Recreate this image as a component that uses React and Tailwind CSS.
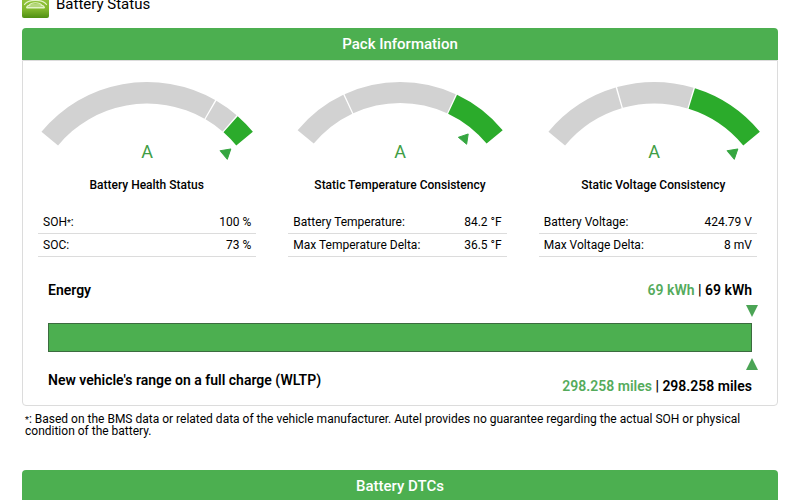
import React from 'react';

const GAUGES = [
  { title: 'Battery Health Status', grade: 'A', splits: [30, 41], pointer: 50, scale: 1 },
  { title: 'Static Temperature Consistency', grade: 'A', splits: [-25, 25], pointer: 40, scale: 0.97 },
  { title: 'Static Voltage Consistency', grade: 'A', splits: [-16, 17], pointer: 50, scale: 1 },
];

const READINGS = [
  [['SOH', '100 %', true], ['SOC', '73 %']],
  [['Battery Temperature', '84.2 °F'], ['Max Temperature Delta', '36.5 °F']],
  [['Battery Voltage', '424.79 V'], ['Max Voltage Delta', '8 mV']],
];

const CX = 109;
const CY = 139;
const OUTER = 137;
const INNER = 115.5;
const SPAN = 50.4;

// angle is measured clockwise from straight up
function point(r, deg) {
  const a = (deg * Math.PI) / 180;
  return `${(CX + r * Math.sin(a)).toFixed(2)} ${(CY - r * Math.cos(a)).toFixed(2)}`;
}

function arc(from, to) {
  return `M${point(OUTER, from)} A${OUTER} ${OUTER} 0 0 1 ${point(OUTER, to)} L${point(INNER, to)} A${INNER} ${INNER} 0 0 0 ${point(INNER, from)} Z`;
}

function Gauge({ title, grade, splits, pointer, scale }) {
  const [a, b] = splits;
  return (
    <div className="flex-1 min-w-0 text-center">
      <svg viewBox="0 0 217 82" className="block w-full" role="img" aria-label={`${title}: ${grade}`}>
        <g transform={`translate(${CX} 2) scale(${scale}) translate(${-CX} -2)`}>
          <path d={arc(-SPAN, a - 0.3)} fill="#d2d2d2" />
          <path d={arc(a + 0.3, b - 0.3)} fill="#d2d2d2" />
          <path d={arc(b + 0.3, SPAN)} fill="#2bab2b" />
          <path
            d={`M${point(109, pointer)} L${point(100, pointer + 3.2)} L${point(100, pointer - 3.2)} Z`}
            fill="#35a640"
            stroke="#35a640"
            strokeLinejoin="round"
          />
        </g>
        <text x={CX} y="78" textAnchor="middle" fontSize="18" fill="#3f9e46">{grade}</text>
      </svg>
      <h3 className="mt-[15px] text-[12px] leading-4 font-medium whitespace-nowrap">{title}</h3>
    </div>
  );
}

// small star that refers to the footnote
function Star() {
  return <span className="text-[9px] leading-none">*</span>;
}

function ReadingTable({ rows }) {
  return (
    <table className="w-full text-[12px] leading-[22px]">
      <tbody>
        {rows.map(([label, value, noted]) => (
          <tr key={label} className="border-b border-[#dcdcdc]">
            <th scope="row" className="pl-[5px] text-left font-normal whitespace-nowrap">
              {label}{noted && <Star />}:
            </th>
            <td className="pr-[5px] text-right whitespace-nowrap">{value}</td>
          </tr>
        ))}
      </tbody>
    </table>
  );
}

function Amount({ current, total }) {
  return (
    <p className="whitespace-nowrap">
      <span className="text-[#55ab5c]">{current}</span> | {total}
    </p>
  );
}

function SectionTitle({ children }) {
  return (
    <h2 className="rounded-t bg-[#4caf50] text-center text-[15px] leading-8 font-medium text-white">
      {children}
    </h2>
  );
}

function CarIcon() {
  return (
    <svg width="27" height="28" viewBox="0 0 27 28" aria-hidden="true">
      <defs>
        <linearGradient id="tile" x1="0" y1="0" x2="0" y2="1">
          <stop offset="0" stopColor="#a5cf45" />
          <stop offset="0.7" stopColor="#7fb62c" />
          <stop offset="1" stopColor="#4f9012" />
        </linearGradient>
      </defs>
      <rect width="27" height="28" rx="2" fill="url(#tile)" />
      <g fill="none" stroke="#e4f3c8" strokeWidth="1.2" strokeLinecap="round">
        <path d="M2.500 14.500 C6 9 21 9 24.500 14.500" />
        <path d="M7.500 15 C9 12 18 12 19.500 15" />
        <path d="M5 17.500 C5 15.500 7 15 9 15 H18 C20 15 22 15.500 22 17.500" />
        <path d="M5 17.500 H22" strokeWidth="1.800" />
      </g>
    </svg>
  );
}

export default function App() {
  return (
    <div className="overflow-hidden bg-white px-[22px] text-black font-['Roboto',sans-serif]">
      <header className="-mt-[10px] mb-[10px] flex items-center gap-[7px]">
        <CarIcon />
        <h1 className="text-[15px] leading-4">Battery Status</h1>
      </header>

      <section>
        <SectionTitle>Pack Information</SectionTitle>
        <div className="rounded-b border border-[#dcdcdc] pb-[9px]">
          <div className="flex gap-9 px-[15px] pt-[19px]">
            {GAUGES.map(g => <Gauge key={g.title} {...g} />)}
          </div>

          <div className="mt-[18px] flex gap-8 pr-5 pl-[15px]">
            {READINGS.map(rows => (
              <div key={rows[0][0]} className="flex-1 min-w-0">
                <ReadingTable rows={rows} />
              </div>
            ))}
          </div>

          <div className="mt-[23px] px-[25px] text-[14px] leading-5 font-semibold">
            <div className="flex justify-between">
              <h3>Energy</h3>
              <Amount current="69 kWh" total="69 kWh" />
            </div>

            <div className="relative mt-[23px] h-[29px] border border-[#3c6b3f] bg-[#4caf50]">
              <svg viewBox="0 0 12 12" className="absolute -top-[19px] -right-[7px] size-3" aria-hidden="true">
                <path d="M0 0 H12 L6 12 Z" fill="#4ba455" />
              </svg>
              <svg viewBox="0 0 12 12" className="absolute -right-[7px] -bottom-[19px] size-3" aria-hidden="true">
                <path d="M0 12 H12 L6 0 Z" fill="#4ba455" />
              </svg>
            </div>

            <div className="mt-[18px] flex items-start justify-between">
              <h3>New vehicle's range on a full charge (WLTP)</h3>
              <div className="pt-[6px]">
                <Amount current="298.258 miles" total="298.258 miles" />
              </div>
            </div>
          </div>
        </div>
        <p className="mt-[7px] pr-6 pl-[3px] text-[12px] leading-3">
          <Star />: Based on the BMS data or related data of the vehicle manufacturer. Autel provides no guarantee regarding the actual SOH or physical condition of the battery.
        </p>
      </section>

      <section className="mt-[33px]">
        <SectionTitle>Battery DTCs</SectionTitle>
      </section>
    </div>
  );
}
